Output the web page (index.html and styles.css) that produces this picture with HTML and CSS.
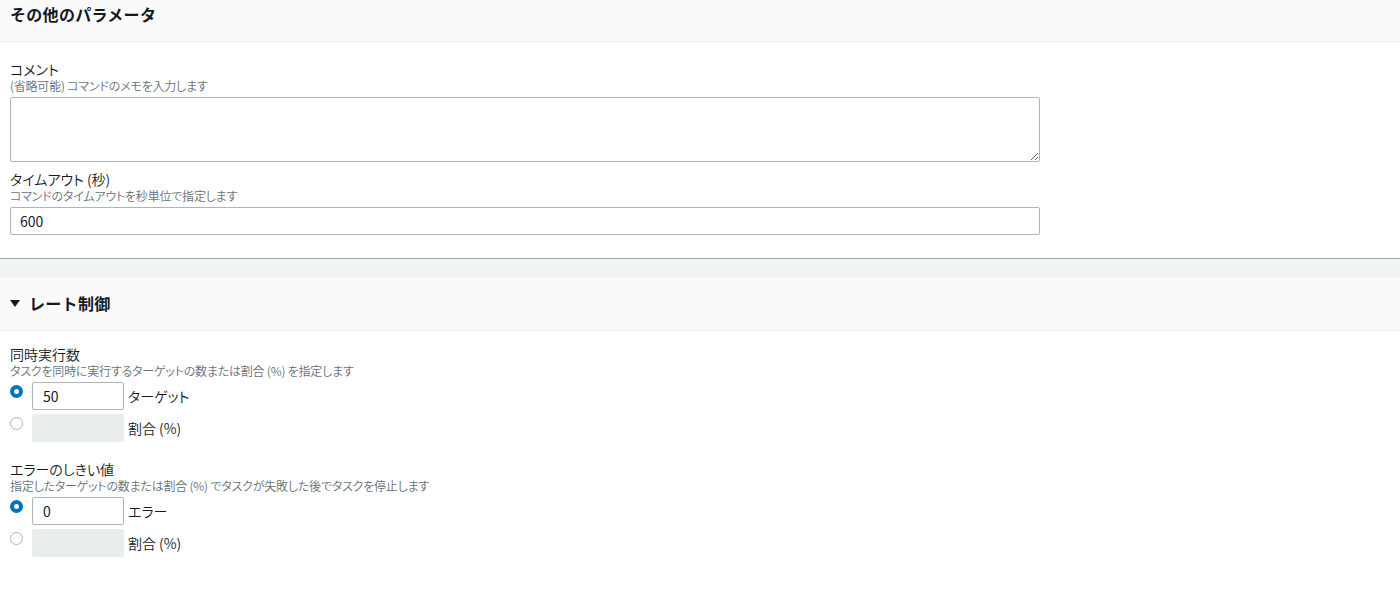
FILE: index.html
```html
<!DOCTYPE html>
<html lang="ja">
<head>
<meta charset="utf-8">
<title>その他のパラメータ</title>
<link rel="stylesheet" href="styles.css">
</head>
<body>
<section class="panel">
  <header class="panel-head panel-head--top">
    <h2 class="panel-title">その他のパラメータ</h2>
  </header>
  <div class="panel-body panel-body--first">
    <div class="field">
      <label class="field-label">コメント</label>
      <div class="field-desc">(省略可能) コマンドのメモを入力します</div>
      <textarea class="text-area"></textarea>
    </div>
    <div class="field field--next">
      <label class="field-label">タイムアウト (秒)</label>
      <div class="field-desc">コマンドのタイムアウトを秒単位で指定します</div>
      <input class="text-input" type="text" value="600">
    </div>
  </div>
</section>
<div class="gap"></div>
<section class="panel panel--last">
  <header class="panel-head">
    <h2 class="panel-title"><span class="caret"></span>レート制御</h2>
  </header>
  <div class="panel-body panel-body--second">
    <div class="field">
      <label class="field-label">同時実行数</label>
      <div class="field-desc">タスクを同時に実行するターゲットの数または割合 (%) を指定します</div>
      <div class="choice-list">
        <div class="choice">
          <input class="radio" type="radio" name="conc" checked>
          <input class="small-input" type="text" value="50">
          <span class="choice-text">ターゲット</span>
        </div>
        <div class="choice">
          <input class="radio" type="radio" name="conc">
          <input class="small-input" type="text" disabled>
          <span class="choice-text">割合 (%)</span>
        </div>
      </div>
    </div>
    <div class="field field--group">
      <label class="field-label">エラーのしきい値</label>
      <div class="field-desc">指定したターゲットの数または割合 (%) でタスクが失敗した後でタスクを停止します</div>
      <div class="choice-list">
        <div class="choice">
          <input class="radio" type="radio" name="err" checked>
          <input class="small-input" type="text" value="0">
          <span class="choice-text">エラー</span>
        </div>
        <div class="choice">
          <input class="radio" type="radio" name="err">
          <input class="small-input" type="text" disabled>
          <span class="choice-text">割合 (%)</span>
        </div>
      </div>
    </div>
  </div>
</section>
</body>
</html>
```
FILE: styles.css
```css
* { box-sizing: border-box; }
html, body {
  margin: 0;
  padding: 0;
  background: #ffffff;
}
body {
  font-family: "Noto Sans CJK JP", "Noto Sans", sans-serif;
  font-feature-settings: "palt";
  color: #16191f;
  font-size: 14px;
  font-weight: 350;
}
.panel {
  background: #ffffff;
  border-bottom: 1px solid #9aa7a8;
}
.panel--last {
  border-bottom: none;
}
.panel-head {
  background: #fafafa;
  border-bottom: 1px solid #eaeded;
  padding: 16px 10px;
  height: 54px;
}
.panel-head--top {
  padding: 4px 10px 0;
  height: 42px;
}
.panel-title {
  margin: 0;
  font-size: 16px;
  font-weight: 700;
  line-height: 21px;
  display: flex;
  align-items: center;
  font-feature-settings: normal;
  letter-spacing: 0.3px;
}
.caret {
  width: 0;
  height: 0;
  border-left: 5px solid transparent;
  border-right: 5px solid transparent;
  border-top: 7px solid #16191f;
  margin: 0 9px 0 0;
}
.panel-body {
  padding: 18px 10px 23px;
}
.panel-body--second {
  padding: 14px 10px 36px;
}
.field {
  display: flex;
  flex-direction: column;
  align-items: flex-start;
}
.field--next { margin-top: 8px; }
.field--group { margin-top: 18px; }
.field-label {
  font-size: 14px;
  line-height: 18px;
  color: #16191f;
}
.field-desc {
  font-size: 12px;
  line-height: 16px;
  color: #687078;
  margin-bottom: 3px;
  letter-spacing: -0.2px;
}
.text-area {
  display: block;
  width: 1030px;
  height: 65px;
  border: 1px solid #aab7b8;
  border-radius: 2px;
  font-family: inherit;
  resize: vertical;
  background: #fff;
}
.text-input {
  display: block;
  width: 1030px;
  height: 28px;
  border: 1px solid #aab7b8;
  border-radius: 2px;
  padding: 0 9px;
  font-family: inherit;
  font-size: 14px;
  font-weight: 400;
  color: #16191f;
  background: #fff;
}
.choice-list {
  display: flex;
  flex-direction: column;
  gap: 4px;
}
.choice {
  display: flex;
  align-items: center;
}
.radio {
  appearance: none;
  -webkit-appearance: none;
  margin: 3px 9px 0 0;
  width: 13px;
  height: 13px;
  border-radius: 50%;
  border: 1px solid #aab7b8;
  background: #fff;
  align-self: flex-start;
}
.radio:checked {
  border: 4px solid #0073bb;
  background: #fff;
}
.small-input {
  width: 92px;
  height: 28px;
  border: 1px solid #aab7b8;
  border-radius: 2px;
  padding: 0 10px;
  font-family: inherit;
  font-size: 14px;
  font-weight: 400;
  color: #16191f;
  background: #fff;
  margin-right: 4px;
}
.small-input:disabled {
  background: #eaeded;
  border-color: #eaeded;
}
.choice-text {
  font-size: 14px;
  line-height: 18px;
  color: #16191f;
}
.gap {
  height: 18px;
  background: #f2f3f3;
}
```
